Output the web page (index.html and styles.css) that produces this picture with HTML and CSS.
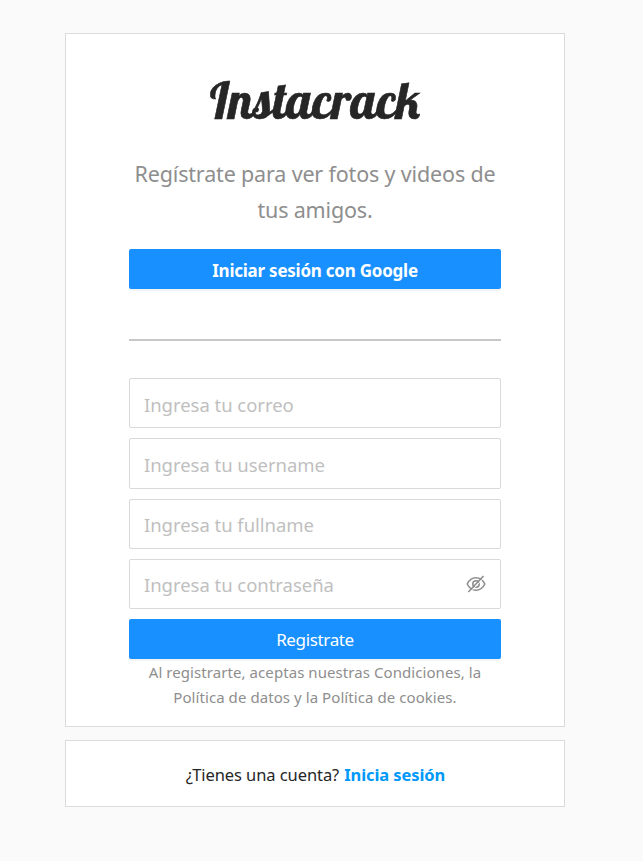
FILE: index.html
```html
<!DOCTYPE html>
<html lang="es">
<head>
<meta charset="utf-8">
<title>Instacrack</title>
<link rel="stylesheet" href="styles.css">
</head>
<body>
<main class="page">
  <section class="card signup">
    <svg class="logo" width="214" height="60" viewBox="0 0 214 60" role="img" aria-label="Instacrack">
      <text x="2" y="46" textLength="210" lengthAdjust="spacingAndGlyphs">Instacrack</text>
    </svg>
    <h2 class="lead">Regístrate para ver fotos y videos de<br>tus amigos.</h2>
    <button class="btn btn-google" type="button">Iniciar sesión con Google</button>
    <hr class="divider">
    <form class="form">
      <input class="field" type="email" placeholder="Ingresa tu correo">
      <input class="field" type="text" placeholder="Ingresa tu username">
      <input class="field" type="text" placeholder="Ingresa tu fullname">
      <div class="field password">
        <input class="password-input" type="password" placeholder="Ingresa tu contraseña">
        <svg class="eye" width="20" height="20" viewBox="0 0 20 20" fill="none" stroke="#8c8c8c" stroke-width="1.5">
          <path d="M1.200 10Q4.200 3.800 10 3.800T18.800 10Q15.800 16.200 10 16.200T1.200 10Z"/>
          <circle cx="10" cy="10" r="3.2"/>
          <path d="M4 18.500L18.600 3" stroke="#fff" stroke-width="1"/>
          <path d="M2.300 18L17.500 2"/>
        </svg>
      </div>
      <button class="btn" type="button">Registrate</button>
    </form>
    <p class="terms">Al registrarte, aceptas nuestras Condiciones, la<br>Política de datos y la Política de cookies.</p>
  </section>
  <section class="card login">
    <span>¿Tienes una cuenta?</span> <a class="login-link">Inicia sesión</a>
  </section>
</main>
</body>
</html>
```
FILE: styles.css
```css
* { box-sizing: border-box; }
body {
  margin: 0;
  background: #fafafa;
  font-family: "Segoe UI", "Noto Sans", "Open Sans", sans-serif;
  color: #262626;
}
.page {
  width: 500px;
  margin: 33px 0 0 65px;
  display: flex;
  flex-direction: column;
  gap: 13px;
}
.card { background: #fff; border: 1px solid #dbdbdb; }
.signup {
  height: 694px;
  padding: 39px 63px 0;
  display: flex;
  flex-direction: column;
}
.logo { align-self: center; flex: none; overflow: visible; }
.logo text {
  font: 50px "Lobster", "Liberation Serif", serif;
  fill: #262626;
  stroke: #262626;
  stroke-width: 0.6;
}
.lead {
  margin: 23px 0 0;
  font-size: 21.500px;
  font-weight: 400;
  line-height: 36px;
  letter-spacing: -0.160px;
  color: #8e8e8e;
  text-align: center;
  white-space: nowrap;
}
.btn {
  display: block;
  width: 100%;
  height: 40px;
  padding: 0;
  border: 0;
  border-radius: 2px;
  background: #1890ff;
  box-shadow: 0 2px 0 rgba(0, 0, 0, 0.045);
  color: #fff;
  font-family: inherit;
  font-size: 17px;
  letter-spacing: -0.350px;
}
.btn-google { margin-top: 21px; padding-top: 2px; font-weight: 700; letter-spacing: -0.240px; flex: none; }
.divider {
  width: 100%;
  height: 2px;
  margin: 50px 0 37px;
  border: 0;
  background: #c8c8c8;
  flex: none;
}
.form { display: flex; flex-direction: column; gap: 10px; }
.field {
  width: 100%;
  height: 50.250px;
  padding: 2px 14px 0;
  border: 1px solid #d9d9d9;
  border-radius: 2px;
  background: #fff;
}
.field, .password-input {
  font-family: inherit;
  font-size: 18.500px;
  letter-spacing: -0.040px;
}
.field::placeholder, .password-input::placeholder { color: #bfbfbf; opacity: 1; }
.password { display: flex; align-items: center; }
.password-input {
  flex: 1;
  min-width: 0;
  padding: 0;
  border: 0;
  background: transparent;
}
.eye { flex: none; margin-top: -2px; }
.terms {
  margin: 1px 0 0;
  font-size: 15px;
  line-height: 25px;
  letter-spacing: 0.070px;
  color: #8e8e8e;
  text-align: center;
  white-space: nowrap;
}
.login {
  height: 67px;
  padding: 1px 0 0 1px;
  display: flex;
  align-items: center;
  justify-content: center;
  gap: 5px;
  font-size: 16.500px;
  letter-spacing: -0.080px;
}
.login-link { color: #0099f9; font-weight: 700; }
```
